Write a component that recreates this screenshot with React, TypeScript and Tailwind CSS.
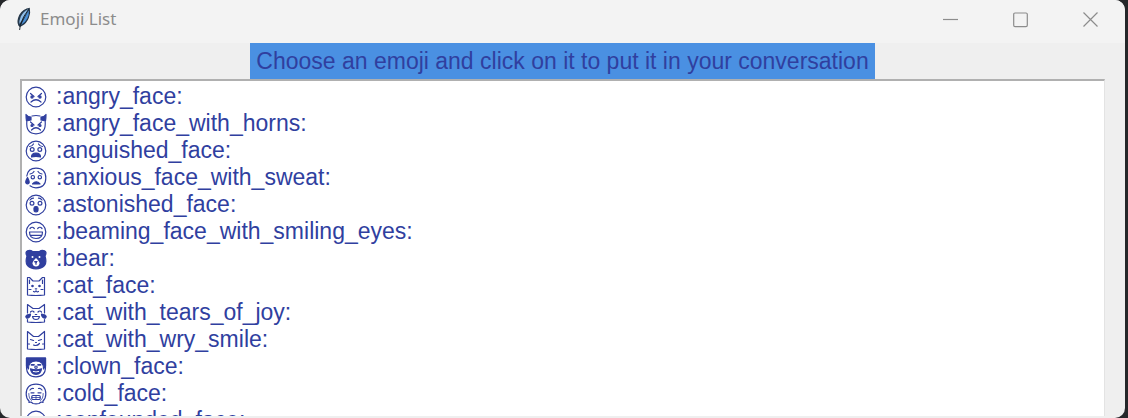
import type { ReactNode } from "react";

const roundHead = <circle cx="11" cy="11" r="9.800" />;

function Icon({ children }: { children: ReactNode }) {
  return (
    <svg
      viewBox="0 0 22 22"
      className="size-[22px] shrink-0"
      fill="none"
      stroke="currentColor"
      strokeWidth="1.200"
      strokeLinecap="round"
      strokeLinejoin="round"
      aria-hidden="true"
    >
      {children}
    </svg>
  );
}

const emojis: { name: string; icon: ReactNode }[] = [
  {
    name: "angry_face",
    icon: (
      <>
        {roundHead}
        <path d="M5.500 7.500l3.500 3M16.500 7.500l-3.500 3M6 16q5-4.500 10 0" />
        <circle cx="7" cy="11" r="1.100" fill="currentColor" />
        <circle cx="15" cy="11" r="1.100" fill="currentColor" />
      </>
    ),
  },
  {
    name: "angry_face_with_horns",
    icon: (
      <>
        <path d="M7 3q4-1 8 0M1.800 8.500Q.8 20.800 11 20.800T20.200 8.500" />
        <path d="M1 1.500q0 4 .5 6.500L6 7V4Q3 4 1 1.500zM21 1.500q0 4-.5 6.500L16 7V4q3 0 5-2.500z" fill="currentColor" />
        <path d="M5.500 9l3.500 3M16.500 9L13 12M6.500 17q4.500-4.500 9 0" />
        <circle cx="7" cy="12.500" r="1" fill="currentColor" />
        <circle cx="15" cy="12.500" r="1" fill="currentColor" />
      </>
    ),
  },
  {
    name: "anguished_face",
    icon: (
      <>
        {roundHead}
        <path d="M4.500 6.500Q7 6.500 8.500 4M17.500 6.500Q15 6.500 13.500 4" />
        <circle cx="7.200" cy="9.500" r="1.900" />
        <circle cx="14.800" cy="9.500" r="1.900" />
        <path d="M6.500 17q0-4 4.500-4t4.500 4q-4.500-1.200-9 0z" fill="currentColor" />
      </>
    ),
  },
  {
    name: "anxious_face_with_sweat",
    icon: (
      <>
        <path d="M1.800 9Q3 1.200 11 1.200q9.800 0 9.800 9.800t-9.800 9.800q-3.500 0-6-2" />
        <path d="M5 7q3-.5 4-2.500M17 7q-3-.5-4-2.500" />
        <circle cx="7.800" cy="10.200" r="1.700" />
        <circle cx="14.800" cy="10.200" r="1.700" />
        <path d="M7.500 17q3.800-4.500 7.500 0z" fill="currentColor" />
        <path d="M2.500 10.500Q0 14.500 1 16q1.500 1.500 3 0 .8-1.500-1.500-5.500z" fill="currentColor" />
      </>
    ),
  },
  {
    name: "astonished_face",
    icon: (
      <>
        {roundHead}
        <path d="M5 6q1.500-2 3.500-1.800M17 6q-1.500-2-3.500-1.800" />
        <circle cx="7" cy="9.200" r="1.900" />
        <circle cx="15" cy="9.200" r="1.900" />
        <rect x="9" y="12.500" width="4" height="5.500" rx="1.800" fill="currentColor" />
      </>
    ),
  },
  {
    name: "beaming_face_with_smiling_eyes",
    icon: (
      <>
        {roundHead}
        <path d="M5 7.500q2.200-2.500 4.300 0M12.700 7.500q2.200-2.500 4.300 0M4.500 11h13q0 6.500-6.500 6.500T4.500 11zM5.500 14.300h11" />
      </>
    ),
  },
  {
    name: "bear",
    icon: (
      <>
        <path d="M2 8Q-.2 4 2.500 2.700q3-1 5 .8h7q2-1.800 5-.8Q22.200 4 20 8q2 7-.5 9.500-3 3.300-8.500 3.300t-8.500-3.300Q0 15 2 8z" fill="currentColor" />
        <path d="M11 10q3.800 3.500 3.500 5.500-.5 3-3.500 3t-3.500-3Q7.200 13.500 11 10z" fill="white" stroke="none" />
        <circle cx="7.500" cy="9" r="1" fill="white" stroke="none" />
        <circle cx="14.500" cy="9" r="1" fill="white" stroke="none" />
        <path d="M9.800 13.500h2.400L11 15zM11 15v1.500" fill="currentColor" strokeWidth="1" />
      </>
    ),
  },
  {
    name: "cat_face",
    icon: (
      <>
        <path d="M2.500 20V2.500h2L8 6h6l3.500-3.500h2V20q-8.500 1-17 0z" />
        <path d="M4.500 5v3.500M17.500 5v3.500M4 14.500h2M16 14.500h2M8.500 16.500q1.500 1 2.500-.7 1 1.700 2.500.7M10.300 13.800h1.400" />
        <circle cx="7.500" cy="11" r=".7" fill="currentColor" />
        <circle cx="14.500" cy="11" r=".7" fill="currentColor" />
      </>
    ),
  },
  {
    name: "cat_with_tears_of_joy",
    icon: (
      <>
        <path d="M2.500 11V2.500L8 6.500h6l5.500-4V11M2.500 17.500V20q8.500 1 17 0v-2.500" />
        <path d="M5.500 10q1.800-2 3.500 0M13 10q1.800-2 3.500 0M10.300 12.500h1.400" />
        <path d="M7.500 14.500h7q-.5 3-3.500 3t-3.500-3z" />
        <path d="M5.500 12q-4.300.5-4.700 2.500.2 2 2.300 1.500 2.400-1 2.400-4zM16.500 12q4.300.5 4.700 2.500-.2 2-2.300 1.500-2.400-1-2.400-4z" fill="currentColor" />
      </>
    ),
  },
  {
    name: "cat_with_wry_smile",
    icon: (
      <>
        <path d="M2.500 20V2.500l6 5h5l6-5V20q-8.500 1-17 0z" />
        <path d="M5.500 10.500l3 1M16.500 10.500l-3 1M10.500 13.500h1M8.500 16q3.500 1.500 6-1.500M2.500 15h2M17.500 15h2" />
      </>
    ),
  },
  {
    name: "clown_face",
    icon: (
      <>
        <path d="M1.500 2h19v9q0 9.800-9.500 9.800T1.500 11z" />
        <path d="M1.500 2h19v8l-2 3q.5-8-7.500-8t-7.500 8l-2-3z" fill="currentColor" />
        <path d="M6.500 8.800H9M13 8.800h2.500" strokeWidth="1.800" />
        <circle cx="11" cy="11.200" r="1.200" />
        <path d="M5.500 12.800q5.500 2 11 0-.5 5.500-5.500 5.500t-5.500-5.500z" fill="currentColor" />
        <path d="M8.300 15.500q2.700 1 5.400 0" stroke="white" strokeWidth="1" />
      </>
    ),
  },
  {
    name: "cold_face",
    icon: (
      <>
        <path d="M4 18Q1.200 15.500 1.200 11q0-9.800 9.800-9.800t9.800 9.800q0 4.500-2.800 7v1.500l-2-.5-2 1.500-3 .3-3-.3L6 19l-2 .5z" />
        <path d="M5 7q1.500-2 3.500-1.500M17 7q-1.500-2-3.500-1.500M6 9.800h3M13 9.800h3" />
        <path d="M3.800 10.500q0 5.500 2.700 7M18.200 10.500q0 5.500-2.700 7" strokeWidth=".8" />
        <rect x="6.800" y="12.500" width="8.400" height="4" rx="1" />
        <path d="M7 14.500h8M11 12.500v4" strokeWidth=".8" />
      </>
    ),
  },
  {
    name: "confounded_face",
    icon: (
      <>
        {roundHead}
        <path d="M5.500 7l3 2-3 2M16.500 7l-3 2 3 2M6 16l2-2 2 2 2-2 2 2 2-2" />
      </>
    ),
  },
];

function Feather() {
  return (
    <svg viewBox="0 0 16 24" className="h-6 w-4 shrink-0" aria-hidden="true">
      <path d="M13.800.8Q7 1.500 3.200 8 .3 14 2.300 18.500l1.500 1.500 2-1Q11 16 12.800 11 15 6 13.800.8z" fill="#26384a" />
      <path d="M12.200 2.200Q7.500 4 4.800 9.500 2.800 14 3.500 17L11.200 5z" fill="#8fbde8" />
      <path d="M12.800 3Q13.300 8 11.300 11.500 9 16 5 18z" fill="#4a8fd6" />
      <path d="M12.500 2.500Q7 9 4.300 18.500L3.600 23" fill="none" stroke="#111b24" strokeWidth=".9" />
    </svg>
  );
}

const controls = [
  { label: "Minimize", path: "M0 7.500h15" },
  { label: "Maximize", path: "M2 1h11q1.300 0 1.300 1.300v11q0 1.300-1.300 1.300H2Q.7 14.600.7 13.300v-11Q.7 1 2 1z" },
  { label: "Close", path: "M.5 .5l14 14M14.500 .5l-14 14" },
];

export default function App() {
  return (
    <div className="h-screen bg-[#25272a] pr-[3px]">
      <div className="flex h-full flex-col overflow-hidden rounded-[10px] bg-[#efefef]">
        <header className="flex h-[43px] shrink-0 items-start justify-between bg-[#f3f3f3]">
          <div className="flex h-[38px] items-center gap-2 pl-4">
            <Feather />
            <h1 className="font-['Noto_Sans',sans-serif] text-[17px] text-[#8c8c8c]">Emoji List</h1>
          </div>
          <div className="flex h-10">
            {controls.map((control) => (
              <button
                key={control.label}
                type="button"
                aria-label={control.label}
                className="flex w-[70px] items-center justify-center text-[#8c8c8c]"
              >
                <svg viewBox="0 0 15 16" className="h-4 w-[15px]" fill="none" stroke="currentColor" strokeWidth="1.200" aria-hidden="true">
                  <path d={control.path} />
                </svg>
              </button>
            ))}
          </div>
        </header>

        <main className="flex min-h-0 flex-1 flex-col pr-5 pb-[2px] pl-5 font-['Liberation_Sans',Arial,sans-serif] text-[23px] text-[#303f9f]">
          <p className="self-center bg-[#4a90e2] px-[6px] leading-9 whitespace-nowrap">
            Choose an emoji and click on it to put it in your conversation
          </p>
          <ul className="min-h-0 flex-1 overflow-hidden border-t-2 border-r border-l-2 border-t-[#b0b0b0] border-r-[#e3e3e3] border-l-[#b0b0b0] bg-white pt-[2px]">
            {emojis.map((emoji) => (
              <li key={emoji.name}>
                <button type="button" className="flex h-[27px] w-full items-center gap-[9px] pl-[3px] text-left leading-[27px]">
                  <Icon>{emoji.icon}</Icon>
                  <span>:{emoji.name}:</span>
                </button>
              </li>
            ))}
          </ul>
        </main>
      </div>
    </div>
  );
}
